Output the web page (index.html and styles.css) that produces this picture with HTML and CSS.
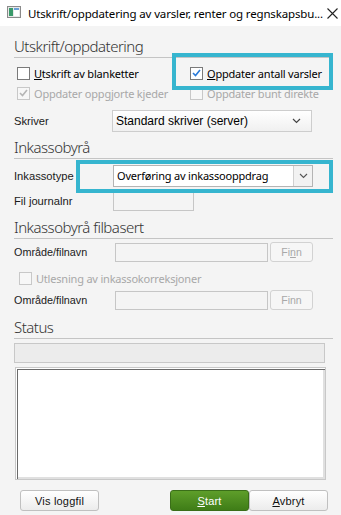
FILE: index.html
```html
<!DOCTYPE html>
<html lang="no">
<head>
    <meta charset="UTF-8">
    <title>Utskrift/oppdatering av varsler</title>
    <link rel="stylesheet" href="styles.css">
</head>
<body>
    <div class="titlebar">
        <svg class="app-icon" width="14" height="12" viewBox="0 0 14 12">
            <rect x="0.5" y="0.5" width="13" height="11" fill="#e8e8e8" stroke="#8a8a8a"/>
            <rect x="2" y="2" width="4" height="8" fill="#3a9a6a"/>
            <rect x="7" y="2" width="5" height="8" fill="#ffffff"/>
            <rect x="7" y="2" width="5" height="2" fill="#6aa0d8"/>
        </svg>
        <span class="title">Utskrift/oppdatering av varsler, renter og regnskapsbu...</span>
        <svg class="close" width="11" height="11" viewBox="0 0 11 11">
            <path d="M0.5 0.5 L10.5 10.5 M10.5 0.5 L0.5 10.5" stroke="#222" stroke-width="1.1"/>
        </svg>
    </div>

    <div class="dialog">
        <h2 class="section">Utskrift/oppdatering</h2>
        <div class="checks">
            <label class="check"><span class="box"></span><span><u>U</u>tskrift av blanketter</span></label>
            <label class="check"><span class="box checked"><svg width="9" height="8" viewBox="0 0 9 8"><path d="M1 4 L3.5 6.5 L8 1" fill="none" stroke="#2a7ad8" stroke-width="1.6"/></svg></span><span><u>O</u>ppdater antall varsler</span></label>
            <label class="check disabled"><span class="box checked"><svg width="9" height="8" viewBox="0 0 9 8"><path d="M1 4 L3.5 6.5 L8 1" fill="none" stroke="#b5b5b5" stroke-width="1.6"/></svg></span><span>Oppdater oppgjorte kjeder</span></label>
            <label class="check disabled"><span class="box"></span><span>Oppdater bunt direkte</span></label>
        </div>

        <div class="row skriver">
            <span class="lbl">Skriver</span>
            <div class="select">
                <span>Standard skriver (server)</span>
                <svg width="9" height="6" viewBox="0 0 9 6"><path d="M1 1 L4.5 4.5 L8 1" fill="none" stroke="#444" stroke-width="1.2"/></svg>
            </div>
        </div>

        <h2 class="section s2">Inkassobyrå</h2>
        <div class="row inkassotype">
            <span class="lbl">Inkassotype</span>
            <div class="combo">
                <span class="combo-text">Overføring av inkassooppdrag</span>
                <span class="combo-btn"><svg width="9" height="6" viewBox="0 0 9 6"><path d="M1 1 L4.5 4.5 L8 1" fill="none" stroke="#555" stroke-width="1.1"/></svg></span>
            </div>
        </div>
        <div class="row journal">
            <span class="lbl">Fil journalnr</span>
            <div class="input small"></div>
        </div>

        <h2 class="section s3">Inkassobyrå filbasert</h2>
        <div class="row file1">
            <span class="lbl">Område/filnavn</span>
            <div class="input wide"></div>
            <button class="finn">Fi<u>n</u>n</button>
        </div>
        <label class="check disabled single"><span class="box"></span><span>Utlesning av inkassokorreksjoner</span></label>
        <div class="row file2">
            <span class="lbl">Område/filnavn</span>
            <div class="input wide"></div>
            <button class="finn">Finn</button>
        </div>

        <h2 class="section s4">Status</h2>
        <div class="progress"></div>
        <div class="log"></div>

        <div class="buttons">
            <button class="btn">Vis loggfil</button>
            <div class="right">
                <button class="btn start"><u>S</u>tart</button>
                <button class="btn"><u>A</u>vbryt</button>
            </div>
        </div>

        <!-- markeringer -->
        <div class="mark mark1"></div>
        <div class="mark mark2"></div>
    </div>
</body>
</html>
```

FILE: styles.css
```css
* {
    box-sizing: border-box;
    margin: 0;
    padding: 0;
}

body {
    width: 341px;
    height: 515px;
    overflow: hidden;
    background: #f4f4f4;
    font-family: "Noto Sans", sans-serif;
    color: #000;
}

.titlebar {
    height: 26px;
    background: #ffffff;
    display: flex;
    align-items: center;
    padding-left: 7px;
}

.app-icon {
    margin-top: -2px;
    flex-shrink: 0;
}

.title {
    margin-left: 7px;
    font-size: 11.5px;
    white-space: nowrap;
    letter-spacing: -0.15px;
}

.close {
    margin-left: auto;
    margin-right: 3px;
    flex-shrink: 0;
}

.dialog {
    position: relative;
    padding: 12px 8px 0 14px;
}

.section {
    font-weight: 300;
    font-size: 15px;
    letter-spacing: -0.5px;
    line-height: 16px;
    padding-bottom: 3px;
    border-bottom: 1px solid #c4c4c4;
    color: #333;
}

.section.s2 { margin-top: 7px; }
.section.s3 { margin-top: 8px; }
.section.s4 { margin-top: 9px; }

.checks {
    display: grid;
    grid-template-columns: 173px 1fr;
    margin-top: 5px;
}

.check {
    display: flex;
    align-items: center;
    height: 20px;
    padding-left: 3px;
    font-size: 11px;
    letter-spacing: -0.2px;
    white-space: nowrap;
}

.check .box {
    width: 13px;
    height: 13px;
    flex-shrink: 0;
    border: 1px solid #7a7a7a;
    background: #fff;
    margin-right: 4px;
    display: flex;
    align-items: center;
    justify-content: center;
}

.check.disabled {
    color: #a8a8a8;
}

.check.disabled .box {
    border-color: #c8c8c8;
    background: #f7f7f7;
}

.check.single {
    margin-top: 6px;
    padding-left: 5px;
}

.row {
    display: flex;
    align-items: center;
}

.lbl {
    width: 98px;
    font-family: "Liberation Sans", sans-serif;
    font-size: 11.2px;
    color: #1a1a1a;
    flex-shrink: 0;
}

.row.skriver { margin-top: 7px; height: 22px; }
.row.inkassotype { margin-top: 6px; height: 22px; }
.row.inkassotype .lbl { width: 99px; }
.row.journal { margin-top: 4px; height: 20px; }
.row.journal .lbl { width: 99px; }
.row.file1 { margin-top: 3px; height: 20px; }
.row.file2 { margin-top: 2px; height: 20px; }
.row.file1 .lbl, .row.file2 .lbl { width: 101px; font-size: 10.8px; }

.select {
    width: 200px;
    height: 22px;
    border: 1px solid #cdcdcd;
    background: linear-gradient(#ffffff, #f0f0f0);
    display: flex;
    align-items: center;
    justify-content: space-between;
    padding: 0 10px 0 3px;
    font-family: "Liberation Sans", sans-serif;
    font-size: 12px;
}

.combo {
    width: 200px;
    height: 22px;
    border: 1px solid #b4b4b4;
    background: #fff;
    display: flex;
}

.combo-text {
    flex: 1;
    padding-left: 3px;
    font-size: 11px;
    letter-spacing: -0.2px;
    line-height: 20px;
    white-space: nowrap;
}

.combo-btn {
    width: 19px;
    border-left: 1px solid #d0d0d0;
    background: #f2f2f2;
    display: flex;
    align-items: center;
    justify-content: center;
}

.input {
    height: 19px;
    border: 1px solid #c6c6c6;
    background: #f4f4f4;
}

.input.small { width: 81px; }
.input.wide { width: 153px; }

.finn {
    width: 43px;
    height: 20px;
    margin-left: 2px;
    border: 1px solid #d2d2d2;
    border-radius: 3px;
    background: #f6f6f6;
    color: #a8a8a8;
    font-family: "Liberation Sans", sans-serif;
    font-size: 10.5px;
}

.progress {
    margin-top: 4px;
    width: 311px;
    height: 20px;
    border: 1px solid #c8c8c8;
    background: #ececec;
}

.log {
    margin-top: 4px;
    margin-left: 1px;
    width: 311px;
    height: 113px;
    border: 1px solid #c8c8c8;
    background: #fff;
    box-shadow: inset 1px 1px 0 #fff, inset 2px 2px 0 #6a6a6a, inset -2px -2px 0 #e0e0e0;
}

.buttons {
    margin-top: 10px;
    display: flex;
    justify-content: space-between;
    padding: 0 5px 0 6px;
}

.right {
    display: flex;
}

.btn {
    width: 79px;
    height: 21px;
    border: 1px solid #c0c0c0;
    border-radius: 3px;
    background: linear-gradient(#ffffff, #ececec);
    font-family: "Liberation Sans", sans-serif;
    font-size: 11px;
    color: #111;
    letter-spacing: 0.2px;
}

.btn.start {
    background: linear-gradient(#5e9e2a, #3f7d17);
    border-color: #3a6e18;
    color: #fff;
}

.mark {
    position: absolute;
    border: 4px solid #36b5cf;
}

.mark1 {
    left: 172px;
    top: 27px;
    width: 161px;
    height: 37px;
}

.mark2 {
    left: 76px;
    top: 134px;
    width: 257px;
    height: 33px;
}
```
